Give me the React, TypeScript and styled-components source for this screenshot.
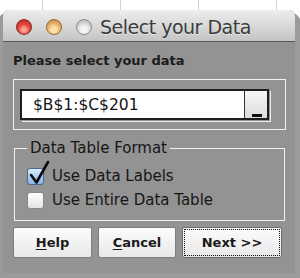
import styled, { createGlobalStyle } from "styled-components";

const GlobalStyle = createGlobalStyle`
  html, body {
    margin: 0;
    padding: 0;
  }
  body {
    font-family: "DejaVu Sans", "Liberation Sans", sans-serif;
  }
`;

const Backdrop = styled.div`
  width: 300px;
  height: 278px;
  overflow: hidden;
  box-sizing: border-box;
  padding: 10px 5px 0 3px;
  background-color: #fff;
  background-image: repeating-linear-gradient(
    to right,
    transparent 0 42px,
    #d2d2d2 42px 43px,
    transparent 43px 78px
  );
`;

const Window = styled.div`
  width: 292px;
  height: 263px;
  display: flex;
  flex-direction: column;
  border-radius: 6px 6px 0 0;
  background: #939393;
  box-shadow: 0 8px 0 6px #9b9b9b;
  overflow: hidden;
`;

const TitleBar = styled.div`
  height: 32px;
  flex-shrink: 0;
  display: flex;
  align-items: center;
  gap: 14px;
  padding: 2px 0 0 13px;
  box-sizing: border-box;
  border-bottom: 1px solid #565656;
  background: linear-gradient(#ededed, #c4c4c4);
`;

const Light = styled.span<{ $color: "red" | "amber" | "gray" }>`
  width: 16px;
  height: 16px;
  border-radius: 50%;
  flex-shrink: 0;
  box-sizing: border-box;
  border: 1px solid
    ${(p) =>
      p.$color === "red" ? "#8c2420" : p.$color === "amber" ? "#9a6a2c" : "#8e8e8e"};
  background: ${(p) =>
    p.$color === "red"
      ? "radial-gradient(circle at 50% 70%, #f7a090 0 18%, #e2463d 45%, #b32b24 100%)"
      : p.$color === "amber"
      ? "radial-gradient(circle at 50% 70%, #fbe0a8 0 22%, #e3b06a 55%, #b57d3c 100%)"
      : "radial-gradient(circle at 50% 70%, #f4f4f4 0 25%, #d2d2d2 60%, #a8a8a8 100%)"};
`;

const Title = styled.span`
  margin-left: -6px;
  font-size: 19px;
  letter-spacing: -0.5px;
  color: #3c3c3c;
  text-shadow: 0 1px 0 rgba(255, 255, 255, 0.5);
`;

const Body = styled.div`
  flex: 1;
  display: flex;
  flex-direction: column;
  padding: 11px 9px 0 10px;
`;

const Prompt = styled.div`
  font-size: 13px;
  line-height: 15px;
  font-weight: bold;
  color: #1c1c1c;
`;

const RangeGroup = styled.div`
  margin-top: 11px;
  border: 1px solid #f2f2f2;
  padding: 9px 16px 9px 6px;
`;

const InputFrame = styled.div`
  height: 31px;
  box-sizing: border-box;
  display: flex;
  border: 2px solid #1e1e1e;
  background: #fff;
  box-shadow: 1px 1px 0 #939393, 2px 2px 0 #ececec;
`;

const RangeValue = styled.span`
  flex: 1;
  display: flex;
  align-items: center;
  padding-left: 11px;
  font-size: 15.5px;
  color: #141414;
`;

const PickerButton = styled.span`
  width: 23px;
  display: flex;
  align-items: flex-end;
  justify-content: center;
  padding-bottom: 1px;
  box-sizing: border-box;
  border-left: 1px solid #333;
  background: linear-gradient(#f6f6f6, #dcdcdc);
`;

const PickerMark = styled.span`
  width: 10px;
  height: 3px;
  margin-left: 2px;
  background: #111;
`;

const FormatGroup = styled.fieldset`
  margin: 9px 1px 0 1px;
  padding: 7px 12px 8px 12px;
  border: 1px solid #f2f2f2;
  display: flex;
  flex-direction: column;
`;

const Legend = styled.legend`
  padding: 0 3px;
  font-size: 15px;
  color: #161616;
`;

const CheckRow = styled.label`
  height: 24px;
  display: flex;
  align-items: center;
  gap: 8px;
  font-size: 15px;
  color: #161616;
`;

const Box = styled.span<{ $checked?: boolean }>`
  position: relative;
  width: 17px;
  height: 17px;
  flex-shrink: 0;
  box-sizing: border-box;
  border-radius: 3px;
  border: 1px solid ${(p) => (p.$checked ? "#4a6790" : "#8a8a8a")};
  background: ${(p) =>
    p.$checked
      ? "linear-gradient(#dcecfb, #a9cdf2 55%, #86b6e8)"
      : "linear-gradient(#ffffff, #e4e4e4)"};
`;

const Tick = styled.svg`
  position: absolute;
  left: 0;
  top: -9px;
  overflow: visible;
`;

const ButtonRow = styled.div`
  margin-top: 6px;
  display: grid;
  grid-template-columns: 79px 78px 100px;
  column-gap: 6px;
  padding-left: 0;
`;

const Button = styled.button<{ $default?: boolean }>`
  height: 31px;
  margin: 0;
  padding: 0;
  box-sizing: border-box;
  border: 1px solid ${(p) => (p.$default ? "#6c6c6c" : "#7e7e7e")};
  border-radius: 2px;
  background: linear-gradient(#fcfcfc, #e8e8e8);
  font-family: "DejaVu Sans", "Liberation Sans", sans-serif;
  font-size: 13px;
  font-weight: bold;
  color: #1a1a1a;
  outline: ${(p) => (p.$default ? "1px dotted #111" : "none")};
  outline-offset: -3px;

  u {
    text-decoration-thickness: 1px;
    text-underline-offset: 2px;
  }
`;

export default function App() {
  return (
    <Backdrop>
      <GlobalStyle />
      <Window>
        <TitleBar>
          <Light $color="red" />
          <Light $color="amber" />
          <Light $color="gray" />
          <Title>Select your Data</Title>
        </TitleBar>
        <Body>
          <Prompt>Please select your data</Prompt>
          <RangeGroup>
            <InputFrame>
              <RangeValue>$B$1:$C$201</RangeValue>
              <PickerButton>
                <PickerMark />
              </PickerButton>
            </InputFrame>
          </RangeGroup>
          <FormatGroup>
            <Legend>Data Table Format</Legend>
            <CheckRow>
              <Box $checked>
                <Tick width="22" height="26" viewBox="0 0 22 26">
                  <path
                    d="M3 15 L8.5 22.5 L20 2"
                    fill="none"
                    stroke="#0c0c0c"
                    strokeWidth="2.6"
                    strokeLinecap="round"
                    strokeLinejoin="round"
                  />
                </Tick>
              </Box>
              Use Data Labels
            </CheckRow>
            <CheckRow>
              <Box />
              Use Entire Data Table
            </CheckRow>
          </FormatGroup>
          <ButtonRow>
            <Button>
              <u>H</u>elp
            </Button>
            <Button>
              <u>C</u>ancel
            </Button>
            <Button $default>Next &gt;&gt;</Button>
          </ButtonRow>
        </Body>
      </Window>
    </Backdrop>
  );
}
